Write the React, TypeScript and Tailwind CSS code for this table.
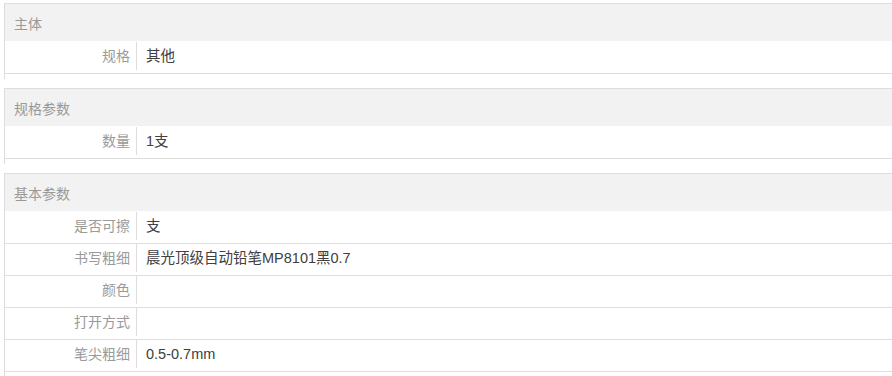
const groups = [
  { title: "主体", rows: [["规格", "其他"]] },
  { title: "规格参数", rows: [["数量", "1支"]] },
  {
    title: "基本参数",
    rows: [
      ["是否可擦", "支"],
      ["书写粗细", "晨光顶级自动铅笔MP8101黑0.7"],
      ["颜色", ""],
      ["打开方式", ""],
      ["笔尖粗细", "0.5-0.7mm"],
    ],
  },
];

const App = () => {
  return (
    <div
      className="w-[892px] h-[376px] overflow-hidden bg-white pl-[4px] pt-[3px] text-[14px] leading-none"
      style={{ fontFamily: '"Liberation Sans", "Noto Sans CJK SC", sans-serif' }}
    >
      {groups.map((g) => (
        <div key={g.title} className="w-[900px] border-t border-l border-[#dddddd] pb-[5px] mb-[9px]">
          {/* group title */}
          <div className="h-[38px] bg-[#f2f2f2] border-b border-white pl-[9px] pt-[2px] flex items-center text-[#999999]">
            {g.title}
          </div>

          {g.rows.map(([label, value]) => (
            <div key={label} className="h-[32px] border-b border-[#dddddd] flex items-start">
              <div className="w-[132px] h-[28px] border-r border-[#dddddd] pr-[6px] flex items-center justify-end text-[#9a9a9a]">
                {label}
              </div>
              <div className="h-[28px] pl-[9px] flex items-center text-[14.5px] text-[#404040]">{value}</div>
            </div>
          ))}
        </div>
      ))}
    </div>
  );
};

export default App;
